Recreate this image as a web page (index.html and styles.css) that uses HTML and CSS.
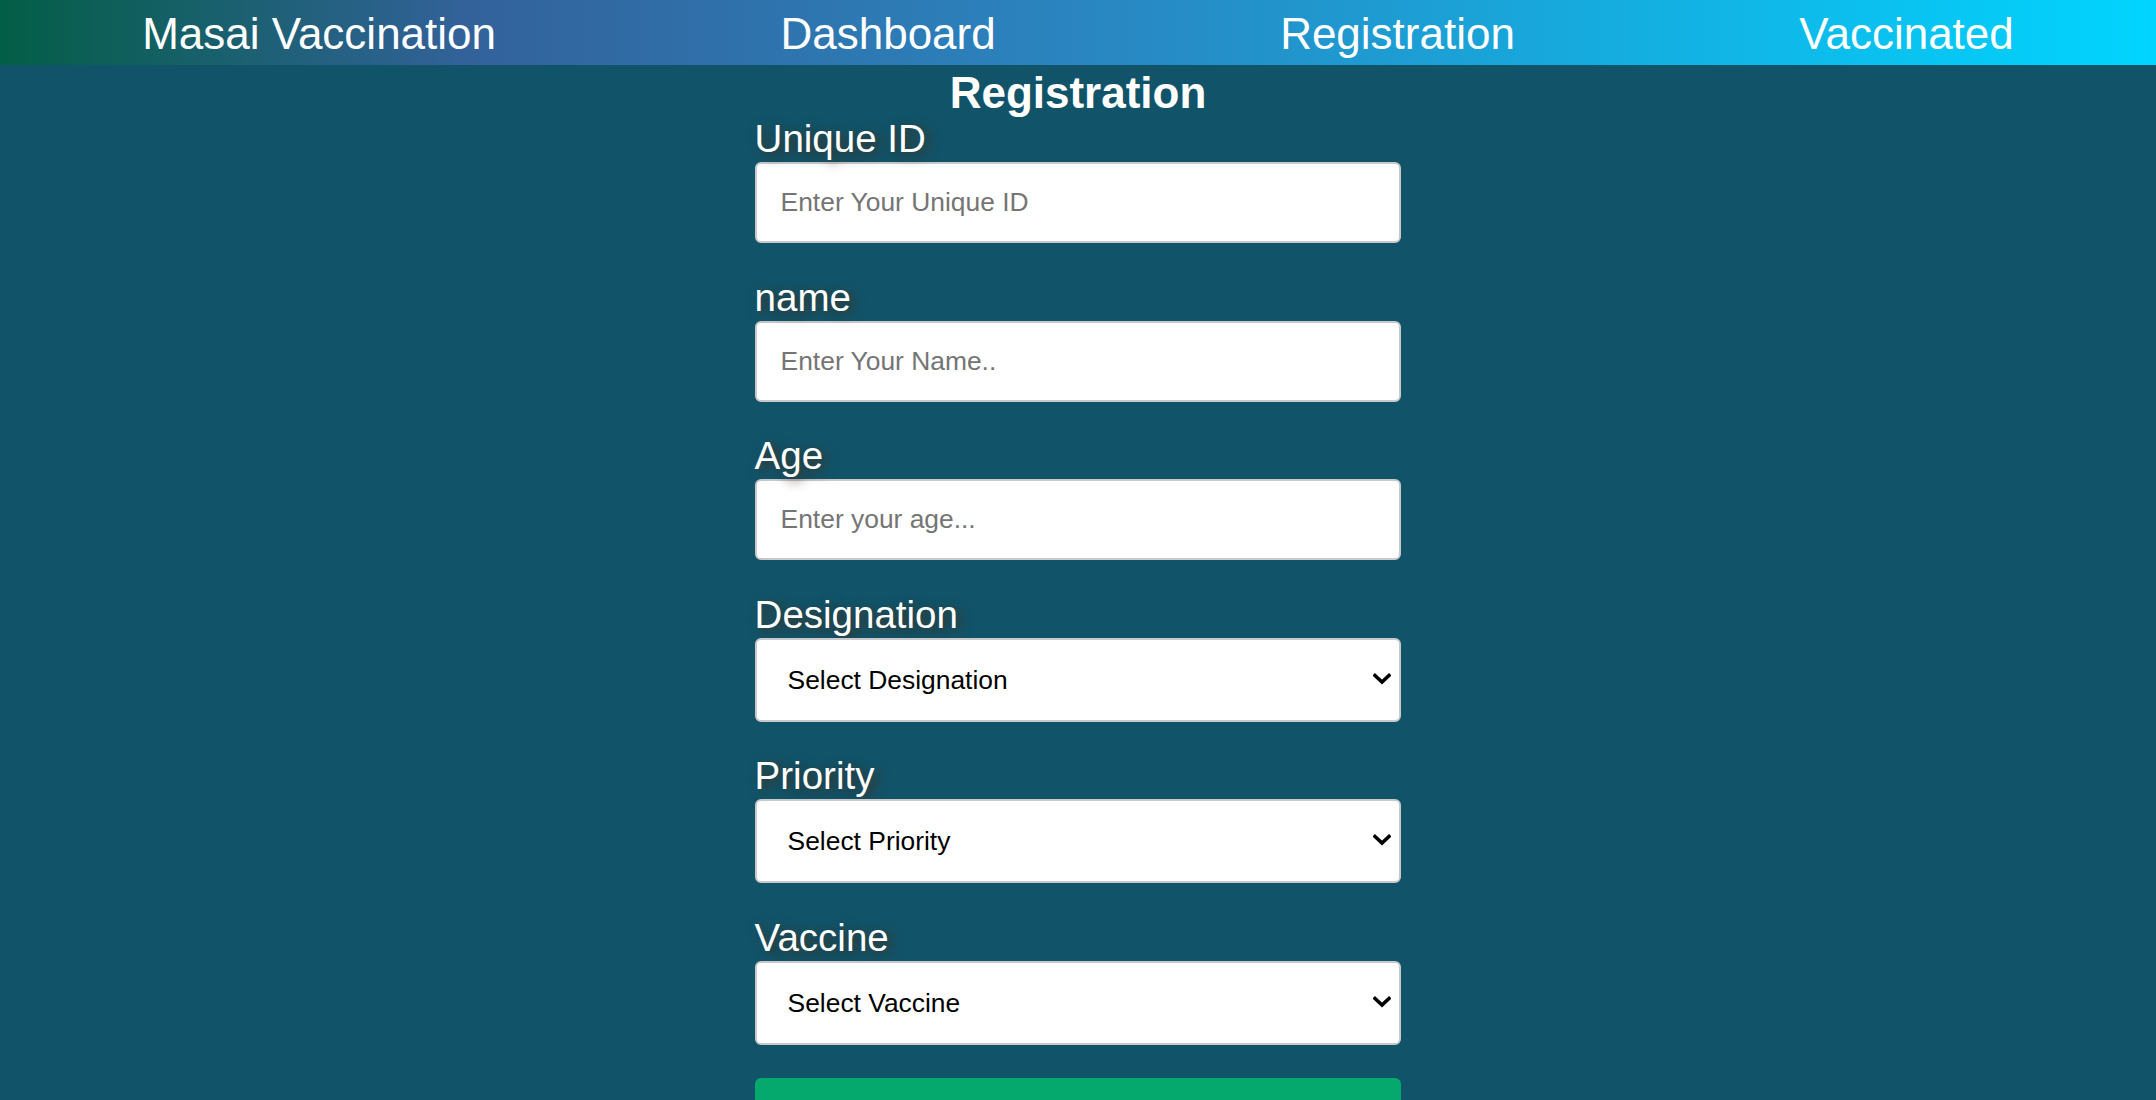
FILE: index.html
```html
<!DOCTYPE html>
<html lang="en">
<head>
<meta charset="utf-8">
<title>Masai Vaccination - Registration</title>
<link rel="stylesheet" href="styles.css">
</head>
<body>
<nav class="navbar">
  <a class="nav-link" href="#">Masai Vaccination</a>
  <a class="nav-link" href="#">Dashboard</a>
  <a class="nav-link" href="#">Registration</a>
  <a class="nav-link" href="#">Vaccinated</a>
</nav>
<main class="page">
  <h1 class="title">Registration</h1>
  <form class="reg-form">
    <div class="field">
      <label class="field-label" for="uid">Unique ID</label>
      <input class="field-input" id="uid" type="text" placeholder="Enter Your Unique ID">
    </div>
    <div class="field">
      <label class="field-label" for="name">name</label>
      <input class="field-input" id="name" type="text" placeholder="Enter Your Name..">
    </div>
    <div class="field">
      <label class="field-label" for="age">Age</label>
      <input class="field-input" id="age" type="number" placeholder="Enter your age...">
    </div>
    <div class="field">
      <label class="field-label" for="desig">Designation</label>
      <div class="select-wrap">
        <select class="field-select" id="desig">
          <option>Select Designation</option>
        </select>
        <svg class="chevron" viewBox="0 0 18 12" aria-hidden="true"><path d="M2 2.5 L9 9 L16 2.5" fill="none" stroke="#000" stroke-width="3.6" stroke-linecap="square"/></svg>
      </div>
    </div>
    <div class="field">
      <label class="field-label" for="prio">Priority</label>
      <div class="select-wrap">
        <select class="field-select" id="prio">
          <option>Select Priority</option>
        </select>
        <svg class="chevron" viewBox="0 0 18 12" aria-hidden="true"><path d="M2 2.5 L9 9 L16 2.5" fill="none" stroke="#000" stroke-width="3.6" stroke-linecap="square"/></svg>
      </div>
    </div>
    <div class="field">
      <label class="field-label" for="vacc">Vaccine</label>
      <div class="select-wrap">
        <select class="field-select" id="vacc">
          <option>Select Vaccine</option>
        </select>
        <svg class="chevron" viewBox="0 0 18 12" aria-hidden="true"><path d="M2 2.5 L9 9 L16 2.5" fill="none" stroke="#000" stroke-width="3.6" stroke-linecap="square"/></svg>
      </div>
    </div>
    <button class="submit-btn" type="submit">Submit</button>
  </form>
</main>
</body>
</html>
```

FILE: styles.css
```css
* {
  box-sizing: border-box;
}

body {
  margin: 0;
  background: #11546a;
  font-family: "Liberation Sans", Arial, sans-serif;
  color: #ffffff;
}

.navbar {
  display: flex;
  justify-content: space-around;
  align-items: center;
  height: 65px;
  background: linear-gradient(90deg, #035e46 0%, #33629b 22%, #2a85c0 50%, #00d5ff 100%);
}

.nav-link {
  color: #ffffff;
  text-decoration: none;
  font-size: 44px;
  line-height: 50px;
  padding-top: 2px;
}

.page {
  padding-bottom: 40px;
}

.title {
  margin: 2px 0 0;
  text-align: center;
  font-size: 44px;
  font-weight: bold;
  line-height: 51px;
}

.reg-form {
  width: 30%;
  margin: 0 auto;
}

.field {
  margin-bottom: 33.5px;
}

.field-label {
  display: block;
  font-size: 38.5px;
  line-height: 44px;
  margin-top: -1px;
  margin-bottom: 1px;
  color: #ffffff;
  text-shadow: 4px 3px 12px rgba(66, 44, 26, 0.95);
}

.field-input,
.field-select {
  display: block;
  width: 100%;
  background: #ffffff;
  border: 2px solid #c9c9c9;
  border-radius: 6px;
  font-family: "Liberation Sans", Arial, sans-serif;
  font-size: 26.4px;
  color: #000000;
  outline: none;
}

.field-input {
  height: 81px;
  padding: 0 24px;
}

.field-input::placeholder {
  color: #757575;
}

.field-input::-webkit-outer-spin-button,
.field-input::-webkit-inner-spin-button {
  -webkit-appearance: none;
  margin: 0;
}

.field-input[type="number"] {
  -moz-appearance: textfield;
}

.select-wrap {
  position: relative;
}

.field-select {
  height: 84px;
  padding: 0 60px 0 31px;
  -webkit-appearance: none;
  appearance: none;
}

.chevron {
  position: absolute;
  right: 10px;
  top: 35px;
  width: 18px;
  height: 12px;
  pointer-events: none;
}

.submit-btn {
  display: block;
  width: 100%;
  height: 81px;
  border: none;
  border-radius: 6px;
  background: #05a86d;
  color: #ffffff;
  font-family: "Liberation Sans", Arial, sans-serif;
  font-size: 33px;
}
```
